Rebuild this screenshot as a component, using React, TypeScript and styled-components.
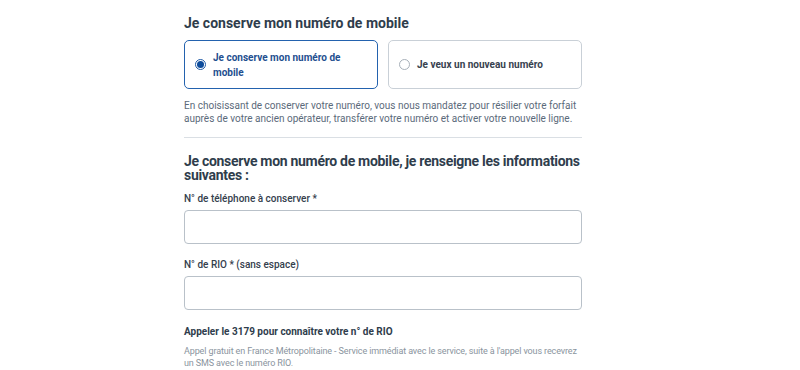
import React, {FC, useState} from 'react';
import styled, {createGlobalStyle} from 'styled-components';

const GlobalStyle = createGlobalStyle`
  body {
    margin: 0;
    background: #ffffff;
    font-family: Roboto, "Liberation Sans", sans-serif;
  }
`

const Page = styled.div`
  width: 800px;
  height: 370px;
  overflow: hidden;
  box-sizing: border-box;
  padding-left: 184px;
`
const Column = styled.div`
  width: 398px;
  padding-top: 15px;
`
const Title = styled.h2`
  margin: 0;
  font-size: 14px;
  line-height: 17px;
  font-weight: 700;
  color: #2f3d4c;
`
const Choices = styled.div`
  display: grid;
  grid-template-columns: 1fr 1fr;
  gap: 10px;
  margin-top: 8px;
`
const Choice = styled.label<{ selected: boolean }>`
  display: flex;
  align-items: center;
  gap: 7px;
  height: 49px;
  box-sizing: border-box;
  padding: 0 10px;
  border-radius: 5px;
  border: ${p => p.selected ? '1.5px solid #2362ae' : '1px solid #c9d0d7'};
  cursor: pointer;
`
const Radio = styled.span<{ selected: boolean }>`
  flex: none;
  width: 11px;
  height: 11px;
  box-sizing: border-box;
  border-radius: 50%;
  border: 1px solid ${p => p.selected ? '#1f5aa6' : '#a7b0b9'};
  display: flex;
  align-items: center;
  justify-content: center;
  &::after {
    content: '';
    width: 7px;
    height: 7px;
    border-radius: 50%;
    background: ${p => p.selected ? '#0d4c9c' : 'transparent'};
  }
`
const ChoiceText = styled.span<{ selected: boolean }>`
  font-size: 10px;
  line-height: 15px;
  font-weight: 700;
  color: ${p => p.selected ? '#1f4f8f' : '#37424f'};
`
const Notice = styled.p`
  margin: 10px 0 0;
  font-size: 10px;
  line-height: 13px;
  color: #5b6a7a;
`
const Divider = styled.hr`
  margin: 12px 0 0;
  border: 0;
  border-top: 1px solid #dadfe4;
`
const SectionTitle = styled(Title)`
  margin-top: 16px;
  line-height: 14px;
  letter-spacing: -0.3px;
`
const Field = styled.div<{ first?: boolean }>`
  display: flex;
  flex-direction: column;
  margin-top: ${p => p.first ? '10px' : '14px'};
`
const Label = styled.label`
  font-size: 10px;
  line-height: 13px;
  font-weight: 500;
  color: #34404d;
`
const Input = styled.input`
  margin-top: 5px;
  height: 34px;
  box-sizing: border-box;
  border: 1px solid #b9c1c9;
  border-radius: 4px;
  padding: 0 10px;
  font: inherit;
  outline: none;
`
const HelpTitle = styled.p`
  margin: 15px 0 0;
  font-size: 10px;
  line-height: 14px;
  font-weight: 700;
  color: #2f3d4c;
`
const HelpText = styled.p`
  margin: 6px 0 0;
  font-size: 9px;
  line-height: 12px;
  letter-spacing: -0.12px;
  color: #8a949e;
`

const App: FC = () => {
    const [keep, setKeep] = useState<boolean>(true)
    return (
        <Page>
            <GlobalStyle/>
            <Column>
                <Title>Je conserve mon numéro de mobile</Title>
                <Choices>
                    <Choice selected={keep} onClick={() => setKeep(true)}>
                        <Radio selected={keep}/>
                        <ChoiceText selected={keep}>Je conserve mon numéro de<br/>mobile</ChoiceText>
                    </Choice>
                    <Choice selected={!keep} onClick={() => setKeep(false)}>
                        <Radio selected={!keep}/>
                        <ChoiceText selected={!keep}>Je veux un nouveau numéro</ChoiceText>
                    </Choice>
                </Choices>
                <Notice>
                    En choisissant de conserver votre numéro, vous nous mandatez pour résilier votre forfait
                    auprès de votre ancien opérateur, transférer votre numéro et activer votre nouvelle ligne.
                </Notice>
                <Divider/>
                <SectionTitle>Je conserve mon numéro de mobile, je renseigne les informations suivantes :</SectionTitle>
                <Field first>
                    <Label>N° de téléphone à conserver *</Label>
                    <Input/>
                </Field>
                <Field>
                    <Label>N° de RIO * (sans espace)</Label>
                    <Input/>
                </Field>
                <HelpTitle>Appeler le 3179 pour connaître votre n° de RIO</HelpTitle>
                <HelpText>
                    Appel gratuit en France Métropolitaine - Service immédiat avec le service, suite à l'appel vous recevrez
                    un SMS avec le numéro RIO.
                </HelpText>
            </Column>
        </Page>
    );
};

export default App
